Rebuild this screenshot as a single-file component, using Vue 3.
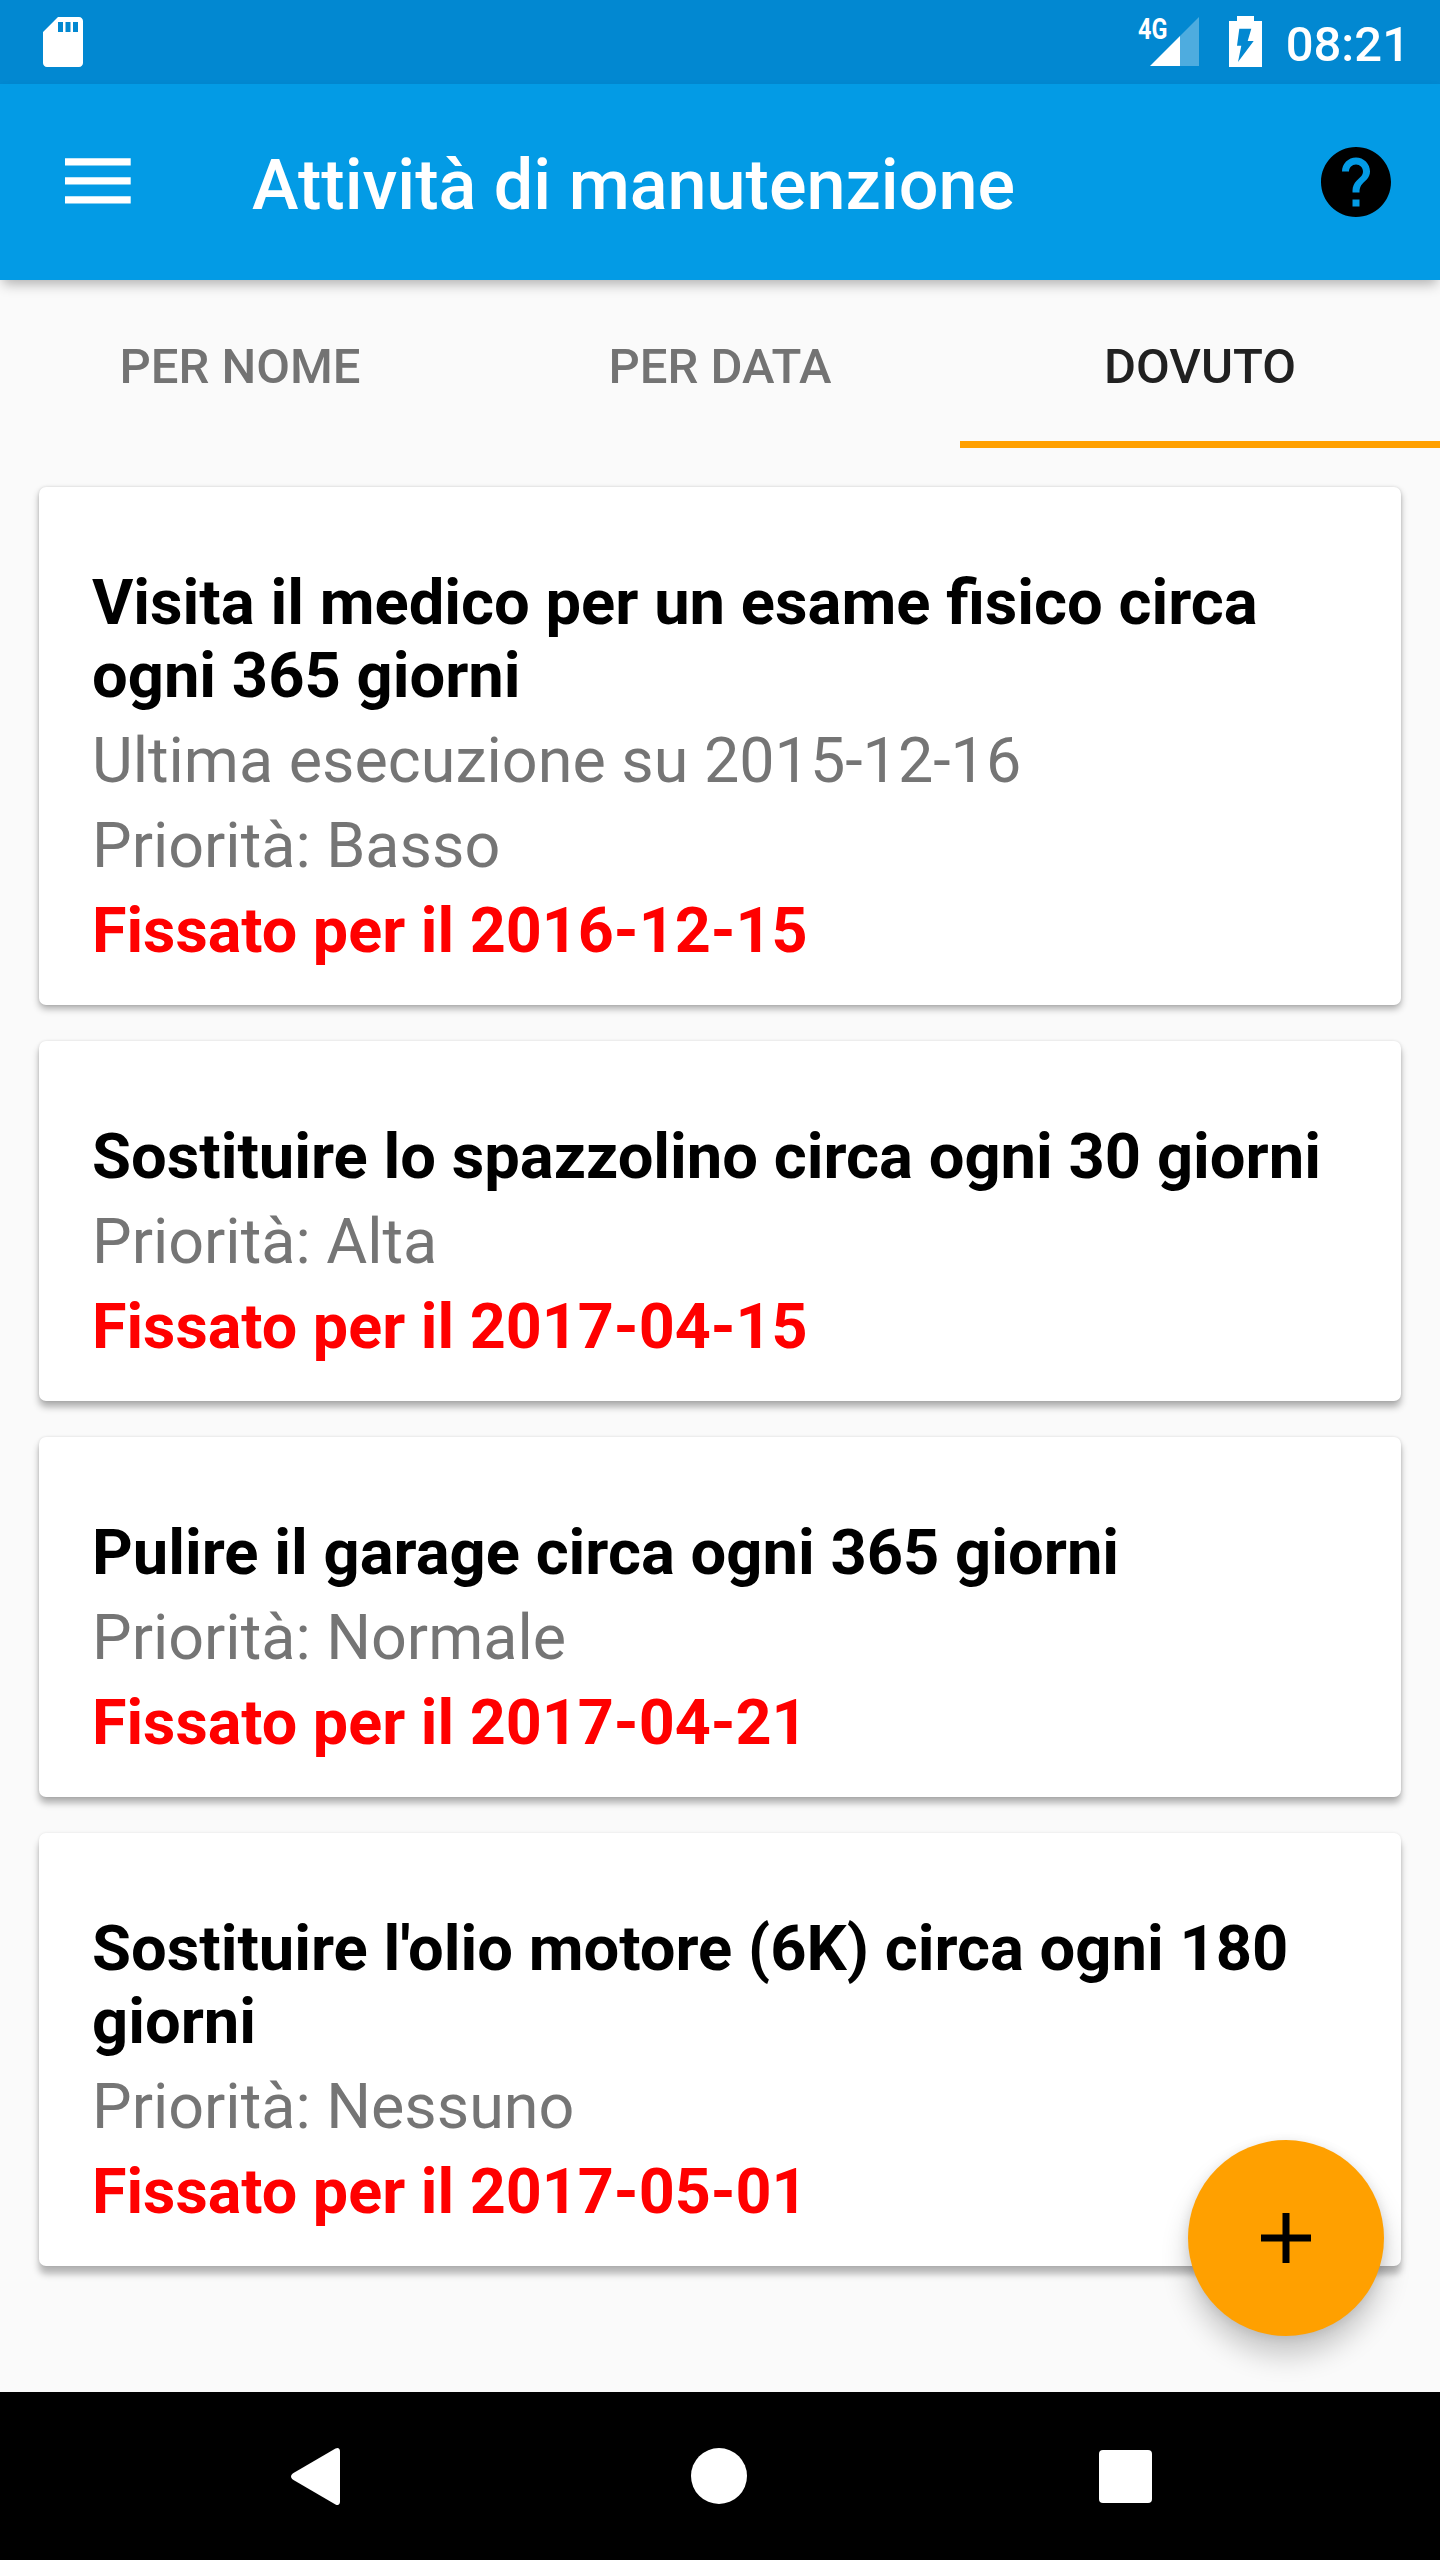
<template>
    <div id="screen">
        <div class="statusbar">
            <svg class="sdcard" viewBox="0 0 24 24">
                <path d="M18.4 2H10L4 8v12.4c0 .9.7 1.6 1.6 1.6h12.8c.9 0 1.6-.7 1.6-1.6V3.600c0-.9-.7-1.6-1.6-1.6zM12 8h-2V4h2v4zm3 0h-2V4h2v4zm3 0h-2V4h2v4z" />
            </svg>
            <div class="status-right">
                <div class="network">
                    <span class="lte">4G</span>
                    <svg class="signal" viewBox="0 0 49 49">
                        <path class="weak" d="M30 19L49 0v49H30z" />
                        <path d="M0 49L30 19v30z" />
                    </svg>
                </div>
                <svg class="battery" viewBox="0 0 33 51">
                    <path fill-rule="evenodd" d="M8 0h17v5h8v46H0V5h8zM10.300 12.700L8 29.700h4.300L9 46l15.700-21h-6L22.300 12.700z" />
                </svg>
                <span class="clock">08:21</span>
            </div>
        </div>

        <div class="toolbar">
            <svg class="menu" viewBox="0 0 66 46">
                <path d="M0 0.300h65.700v7.200H0zM0 19.300h65.700v7.200H0zM0 38.300h65.700v7.200H0z" />
            </svg>
            <h1>Attività di manutenzione</h1>
            <svg class="help" viewBox="0 0 24 24">
                <path d="M12 2C6.480 2 2 6.480 2 12s4.480 10 10 10 10-4.480 10-10S17.520 2 12 2zm1 17h-2v-2h2v2zm2.070-7.750l-.9.92C13.450 12.900 13 13.500 13 15h-2v-.5c0-1.100.45-2.100 1.170-2.830l1.240-1.260c.37-.36.59-.86.59-1.410 0-1.100-.9-2-2-2s-2 .9-2 2H8c0-2.210 1.790-4 4-4s4 1.790 4 4c0 .88-.36 1.680-.93 2.250z" />
            </svg>
        </div>

        <div class="tabs">
            <div v-for="tab in tabs" :key="tab" class="tab" :class="{ active: tab == current }" @click="current = tab">{{tab}}</div>
        </div>

        <ul class="list">
            <li v-for="task in tasks" :key="task.title" class="card">
                <h2>{{task.title}}</h2>
                <p v-if="task.last">Ultima esecuzione su {{task.last}}</p>
                <p>Priorità: {{task.priority}}</p>
                <p class="due">Fissato per il {{task.due}}</p>
            </li>
        </ul>

        <button class="fab">
            <svg viewBox="0 0 50 50">
                <path d="M21.500 0h7v21.500H50v7H28.500V50h-7V28.500H0v-7h21.500z" />
            </svg>
        </button>

        <div class="navbar">
            <svg class="back" viewBox="0 0 49 57">
                <path d="M44.500 .6C47 -.8 49 .3 49 3.500v50c0 3.200-2 4.300-4.500 2.900L2.500 32C-.8 30-.8 27 2.500 25z" />
            </svg>
            <div class="home"></div>
            <div class="recent"></div>
        </div>
    </div>
</template>

<script setup>
import {ref} from 'vue';

    const tabs = ["PER NOME", "PER DATA", "DOVUTO"];
    const current = ref("DOVUTO");

    const tasks = ref([
        {
            title: "Visita il medico per un esame fisico circa ogni 365 giorni",
            last: "2015-12-16",
            priority: "Basso",
            due: "2016-12-15"
        },
        {
            title: "Sostituire lo spazzolino circa ogni 30 giorni",
            priority: "Alta",
            due: "2017-04-15"
        },
        {
            title: "Pulire il garage circa ogni 365 giorni",
            priority: "Normale",
            due: "2017-04-21"
        },
        {
            title: "Sostituire l'olio motore (6K) circa ogni 180 giorni",
            priority: "Nessuno",
            due: "2017-05-01"
        }
    ]);
</script>

<style>
body {
    margin: 0;
    background-color: #fafafa;
}
</style>

<style scoped>
#screen {
    position: relative;
    display: flex;
    flex-direction: column;
    width: 1440px;
    height: 2560px;
    overflow: hidden;
    background-color: #fafafa;
    font-family: Roboto, "Liberation Sans", sans-serif;
}
h1, h2, p, ul {
    margin: 0;
    padding: 0;
}
svg {
    display: block;
    flex: none;
}
.statusbar {
    display: flex;
    justify-content: space-between;
    height: 84px;
    box-sizing: border-box;
    padding: 0 30px 0 33px;
    background-color: #0288d1;
    color: #fff;
    fill: #fff;
}
.sdcard {
    width: 60px;
    height: 60px;
    margin-top: 12px;
}
.status-right {
    display: flex;
    align-items: flex-start;
}
.network {
    display: flex;
    padding-top: 17px;
}
.lte {
    width: 12px;
    font-size: 30px;
    line-height: 24px;
    font-weight: 700;
    white-space: nowrap;
    transform: scaleX(.78);
    transform-origin: left;
}
.signal {
    width: 49px;
    height: 49px;
}
.weak {
    fill: #4eacdf;
}
.battery {
    width: 33px;
    height: 51px;
    margin: 16px 24px 0 30px;
}
.clock {
    font-size: 49px;
    line-height: 58px;
    font-weight: 500;
    padding-top: 16px;
}
.toolbar {
    display: flex;
    align-items: center;
    flex: none;
    height: 196px;
    box-sizing: border-box;
    padding: 0 42px 0 65px;
    background-color: #039be5;
    box-shadow: 0 7px 12px -3px rgba(0, 0, 0, .3);
}
.menu {
    width: 66px;
    height: 46px;
    margin-top: -3px;
    fill: #fff;
}
.toolbar h1 {
    flex: 1;
    margin-left: 121px;
    padding-top: 6px;
    color: #fff;
    font-size: 70.150px;
    line-height: 82px;
    font-weight: 500;
}
.help {
    width: 84px;
    height: 84px;
}
.tabs {
    display: grid;
    grid-template-columns: repeat(3, 1fr);
    height: 168px;
    flex: none;
}
.tab {
    padding-top: 58px;
    color: #737373;
    text-align: center;
    font-size: 49px;
    line-height: 58px;
    font-weight: 500;
}
.tab.active {
    color: #212121;
    border-bottom: 7px solid #ffa000;
}
.list {
    display: flex;
    flex-direction: column;
    flex: 1;
    gap: 36px;
    padding: 39px 39px 0;
    list-style: none;
}
.card {
    padding: 79px 53px 37px;
    border-radius: 7px;
    background-color: #fff;
    box-shadow: 0 4px 7px rgba(0, 0, 0, .3), 0 0 3px rgba(0, 0, 0, .12);
}
/* the shadow gets longer towards the bottom of the screen */
.card:nth-child(2), .card:nth-child(3) {
    box-shadow: 0 6px 7px rgba(0, 0, 0, .3), 0 0 3px rgba(0, 0, 0, .12);
}
.card:nth-child(4) {
    box-shadow: 0 8px 7px rgba(0, 0, 0, .28), 0 0 3px rgba(0, 0, 0, .1);
}
.card h2 {
    margin-bottom: 12px;
    color: #000;
    font-size: 63.300px;
    line-height: 73px;
    font-weight: 700;
}
.card p {
    color: #757575;
    font-size: 62.850px;
    line-height: 74px;
}
.card p + p {
    margin-top: 11px;
}
.card .due {
    color: #f00;
    font-weight: 700;
}
.fab {
    position: absolute;
    right: 56px;
    bottom: 224px;
    display: flex;
    align-items: center;
    justify-content: center;
    width: 196px;
    height: 196px;
    padding: 0;
    border: none;
    border-radius: 50%;
    background-color: #ffa000;
    box-shadow: 0 20px 28px rgba(0, 0, 0, .2), 0 2px 12px rgba(0, 0, 0, .1);
}
.fab svg {
    width: 50px;
    height: 50px;
}
.navbar {
    display: flex;
    align-items: center;
    justify-content: space-between;
    flex: none;
    height: 168px;
    box-sizing: border-box;
    padding: 0 288px 0 291px;
    background-color: #000;
}
.back {
    width: 49px;
    height: 57px;
    fill: #fff;
}
.home {
    width: 56px;
    height: 56px;
    margin-right: 2px;
    border-radius: 50%;
    background-color: #fff;
}
.recent {
    width: 53px;
    height: 53px;
    border-radius: 4px;
    background-color: #fff;
}
</style>
